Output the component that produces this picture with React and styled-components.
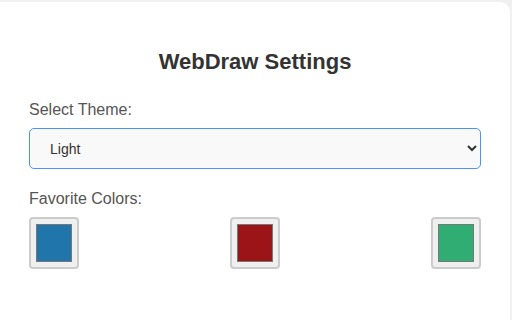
import React, { useState } from "react";
import styled, { createGlobalStyle } from "styled-components";

const GlobalStyle = createGlobalStyle`
  html, body {
    margin: 0;
    padding: 0;
    background: #f0f0f0;
    font-family: "Liberation Sans", Arial, sans-serif;
  }
`;

const Card = styled.div`
  margin: 2px 2px 0 0;
  height: 318px;
  box-sizing: border-box;
  background: #ffffff;
  border-radius: 0 10px 0 0;
  padding: 47px 29px 0 29px;
`;

const Title = styled.h2`
  margin: 0 0 27px 0;
  text-align: center;
  font-size: 22px;
  font-weight: bold;
  color: #333333;
  line-height: 25px;
`;

const Label = styled.label`
  display: block;
  font-size: 16px;
  line-height: 18px;
  color: #555555;
  margin-bottom: ${(p) => p.$gap}px;
`;

const Select = styled.select`
  display: block;
  width: 100%;
  height: 41px;
  box-sizing: border-box;
  padding: 0 8px 0 16px;
  font-family: "Liberation Sans", Arial, sans-serif;
  font-size: 14px;
  color: #333333;
  background: #f9f9f9;
  border: 1px solid #4d90fe;
  border-radius: 5px;
  outline: none;
  margin-bottom: 21px;
`;

const SwatchRow = styled.div`
  display: flex;
  justify-content: space-between;
`;

const Swatch = styled.button`
  width: 50px;
  height: 52px;
  box-sizing: border-box;
  padding: 5px;
  background: #efefef;
  border: 2px solid #cccccc;
  border-radius: 4px;
  cursor: pointer;
  display: flex;
`;

const Fill = styled.span`
  flex: 1;
  background: ${(p) => p.$color};
  border: 1px solid #777777;
`;

const colors = ["#2075ab", "#9a1418", "#2fad73"];

export default function App() {
  const [theme, setTheme] = useState("light");
  return (
    <>
      <GlobalStyle />
      <Card>
        <Title>WebDraw Settings</Title>
        <Label $gap={9} htmlFor="theme">Select Theme:</Label>
        <Select id="theme" value={theme} onChange={(e) => setTheme(e.target.value)}>
          <option value="light">Light</option>
          <option value="dark">Dark</option>
        </Select>
        <Label $gap={9}>Favorite Colors:</Label>
        <SwatchRow>
          {colors.map((c) => (
            <Swatch key={c}>
              <Fill $color={c} />
            </Swatch>
          ))}
        </SwatchRow>
      </Card>
    </>
  );
}
